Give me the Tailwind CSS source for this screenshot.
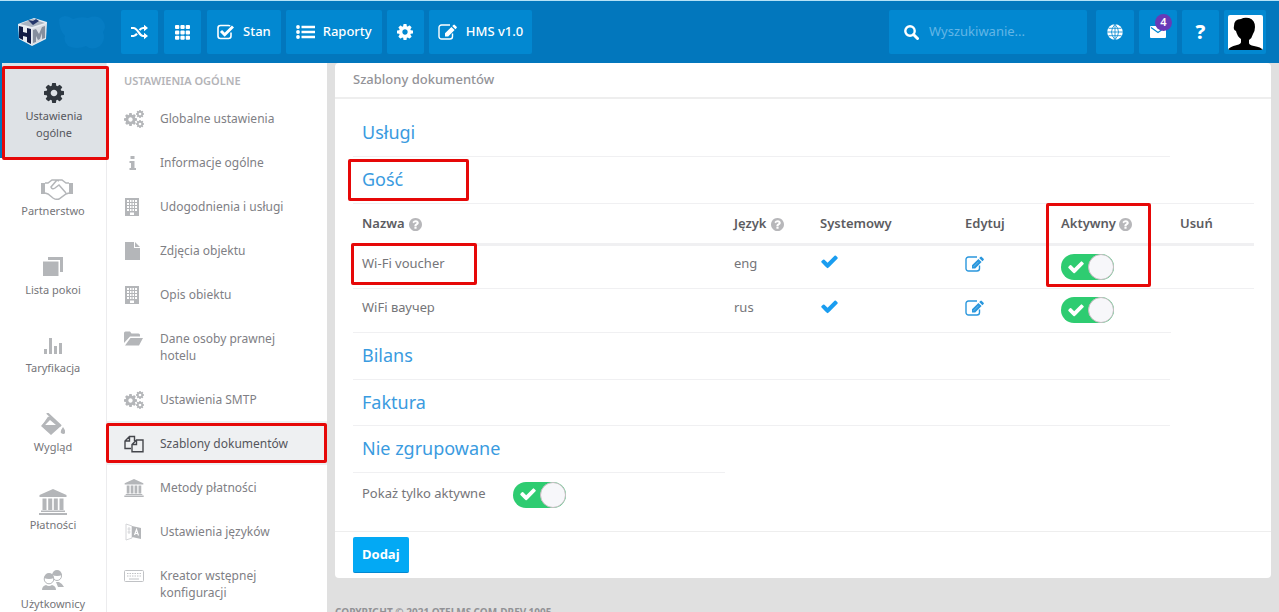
<!DOCTYPE html>
<html lang="pl">
<head>
<meta charset="utf-8">
<meta name="viewport" content="width=device-width, initial-scale=1">
<title>Szablony dokumentów</title>
<script src="https://cdn.jsdelivr.net/npm/@tailwindcss/browser@4"></script>
</head>
<body class="flex h-screen flex-col overflow-hidden bg-[#e0e0e0] font-['Noto_Sans','Open_Sans',sans-serif] text-xs text-[#757579]">

<svg class="hidden" aria-hidden="true">
  <symbol id="check" viewBox="0 0 1792 1792"><path d="M1671 566q0 40-28 68l-724 724-136 136q-28 28-68 28t-68-28l-136-136-362-362q-28-28-28-68t28-68l136-136q28-28 68-28t68 28l294 295 656-657q28-28 68-28t68 28l136 136q28 28 28 68z"/></symbol>
  <symbol id="cog" viewBox="128 128 1536 1536"><path d="M1152 896q0-106-75-181t-181-75-181 75-75 181 75 181 181 75 181-75 75-181zm512-109v222q0 12-8 23t-20 13l-185 28q-19 54-39 91 35 50 107 138 10 12 10 25t-9 23q-27 37-99 108t-94 71q-12 0-26-9l-138-108q-44 23-91 38-16 136-29 186-7 28-36 28h-222q-14 0-24.500-8.500t-11.500-21.500l-28-184q-49-16-90-37l-141 107q-10 9-25 9-14 0-25-11-126-114-165-168-7-10-7-23 0-12 8-23 15-21 51-66.500t54-70.500q-27-50-41-99l-183-27q-13-2-21-12.500t-8-23.500v-222q0-12 8-23t19-13l186-28q14-46 39-92-40-57-107-138-10-12-10-24 0-10 9-23 26-36 98.500-107.500t94.500-71.500q13 0 26 10l138 107q44-23 91-38 16-136 29-186 7-28 36-28h222q14 0 24.500 8.500t11.500 21.500l28 184q49 16 90 37l142-107q9-9 24-9 13 0 25 10 129 119 165 170 7 8 7 22 0 12-8 23-15 21-51 66.500t-54 70.500q26 50 41 98l183 28q13 2 21 12.500t8 23.500z"/></symbol>
  <symbol id="help" viewBox="128 128 1536 1536"><path d="M1024 1376v-192q0-14-9-23t-23-9h-192q-14 0-23 9t-9 23v192q0 14 9 23t23 9h192q14 0 23-9t9-23zm256-672q0-88-55.500-163t-138.500-116-170-41q-243 0-371 213-15 24 8 42l132 100q7 6 19 6 16 0 25-12 53-68 86-92 34-24 86-24 48 0 85.500 26t37.500 59q0 38-20 61t-68 45q-63 28-115.500 86.500t-52.500 125.500v36q0 14 9 23t23 9h192q14 0 23-9t9-23q0-19 21.500-49.500t54.500-49.500q32-18 49-28.500t46-35 44.500-48 28-60.500 12.500-81zm384 192q0 209-103 385.500t-279.500 279.500-385.500 103-385.500-103-279.500-279.500-103-385.500 103-385.500 279.500-279.500 385.500-103 385.500 103 279.500 279.500 103 385.500z"/></symbol>
  <symbol id="edit" viewBox="0 0 20 16"><path d="M14.500 9.500v3a2.500 2.500 0 0 1-2.500 2.500H3.500A2.500 2.500 0 0 1 1 12.500v-9A2.500 2.500 0 0 1 3.500 1H12" fill="none" stroke="currentColor" stroke-width="1.400"/><path d="M7 12.500V9.300l6.400-6.400 3.200 3.200-6.400 6.400zM14.200 2.100l1.200-1.200q.7-.7 1.400 0l1.800 1.800q.7.700 0 1.400l-1.200 1.200z"/><path d="M8.500 10.800l5-5" stroke="#fff" stroke-opacity=".5" stroke-width=".6"/></symbol>
  <symbol id="cogs" viewBox="0 0 20 18"><use href="#cog" x="0" y="3" width="13" height="13"/><use href="#cog" x="12" y="0" width="8" height="8"/><use href="#cog" x="12" y="10" width="8" height="8"/></symbol>
  <symbol id="building" viewBox="0 0 14 18"><path fill-rule="evenodd" d="M0 0h14v18H0zM2 2v2h2V2zm3 0v2h1.500V2zm2.500 0v2H9V2zM10 2v2h2V2zM2 5v2h2V5zm3 0v2h1.500V5zm2.500 0v2H9V5zM10 5v2h2V5zM2 8v2h2V8zm3 0v2h1.500V8zm2.500 0v2H9V8zM10 8v2h2V8zM2 11v2h2v-2zm3 0v2h1.500v-2zm2.500 0v2H9v-2zm2.500 0v2h2v-2zM5 14.500V17h4v-2.500z"/></symbol>
  <symbol id="bank" viewBox="0 0 28 26"><path d="M14 0l13.500 6v2H.5V6zM3.500 9.500h4V21h-4zm5.700 0h4V21h-4zm5.600 0h4V21h-4zm5.700 0h4V21h-4zM2 21.500h24V23H2zM0 24h28v2H0z"/></symbol>
</svg>

<header class="flex h-[63px] shrink-0 items-center justify-between border-t border-[#b5e2f7] bg-[#0277bd] pr-[13px] pl-4 text-white">
  <div class="flex items-center gap-[5px]">
    <a href="#" aria-label="HM" class="mr-[14px] flex w-[86px] items-center gap-[6px]">
      <svg class="h-8 w-9 shrink-0" viewBox="0 0 36 32">
        <path d="M18 2l13 4-1 17-14 7L3 23 2 8z" fill="#e8edf3"/>
        <path d="M17 3l12 4-13 4L4 8z" fill="#aab4c2"/>
        <path d="M12 4l5 1 3-2 3 2-6 4-3-3z" fill="#24366a"/>
        <path d="M3 10l4 1v5l4 1v-5l4 1v15l-4-2v-5l-4-1v4l-4-2z" fill="#111b45"/>
        <path d="M16 13l14-5v14l-14 7z" fill="#d8dce2"/>
        <path d="M17 14l3-1 3 5 3-7 3-1v12l-3 1v-6l-2 6-2 1-2-4v6l-3 1z" fill="#868f9e"/>
      </svg>
      <svg class="h-9 w-[50px] shrink-0" viewBox="0 0 50 36"><path d="M1 5q5-6 14 0 8-3 15-1 10-4 15 3 4 6 0 11 3 8-3 14-8 5-14 0-9 4-18 0-5-5-3-10-6-6-6-17z" fill="#067cc3"/></svg>
    </a>
    <button aria-label="Losowo" class="flex h-11 w-[37px] items-center justify-center rounded-xs bg-[#0288d1]">
      <svg class="h-4 w-[17px]" viewBox="0 0 17 16" fill="none" stroke="currentColor" stroke-width="2.200"><path d="M0 4h2.500C7 4 8 12 12 12h2M0 12h2.500q2 0 3.500-2.300M8.500 6.200Q10 4 12 4h2"/><path d="M13 .8L17 4l-4 3.200zM13 8.800l4 3.200-4 3.200z" fill="currentColor" stroke="none"/></svg>
    </button>
    <button aria-label="Siatka" class="ml-px flex h-11 w-[37px] items-center justify-center rounded-xs bg-[#0288d1]">
      <svg class="size-[15px]" viewBox="0 0 15 15" fill="currentColor"><g id="r"><rect width="4.300" height="4" rx="1"/><rect x="5.400" width="4.300" height="4" rx="1"/><rect x="10.700" width="4.300" height="4" rx="1"/></g><use href="#r" y="5.400"/><use href="#r" y="10.800"/></svg>
    </button>
    <button class="ml-px flex h-11 items-center gap-[9px] rounded-xs bg-[#0288d1] px-[10px] text-[13px] font-medium">
      <svg class="h-4 w-[17px]" viewBox="0 0 17 16"><path d="M14 8.500v3.500q0 2.500-2.500 2.500h-8Q1 14.500 1 12V4q0-2.500 2.500-2.500h8q1 0 1.700.4" fill="none" stroke="currentColor" stroke-width="1.600"/><path d="M4 7l3.700 3.700L16 2.500" fill="none" stroke="currentColor" stroke-width="3"/></svg>
      Stan
    </button>
    <button class="flex h-11 items-center gap-2 rounded-xs bg-[#0288d1] px-[10px] text-[13px] font-medium">
      <svg class="h-4 w-[19px]" viewBox="0 0 19 16" fill="currentColor"><circle cx="2" cy="3" r="1.900"/><circle cx="2" cy="8" r="1.900"/><circle cx="2" cy="13" r="1.900"/><path d="M5.500 1.700H19v2.600H5.500zm0 5H19v2.600H5.500zm0 5H19v2.600H5.500z"/></svg>
      Raporty
    </button>
    <button aria-label="Ustawienia" class="flex h-11 w-[37px] items-center justify-center rounded-xs bg-[#0288d1]">
      <svg class="size-4 fill-current"><use href="#cog"/></svg>
    </button>
    <button class="flex h-11 items-center gap-2 rounded-xs bg-[#0288d1] px-[9px] text-[13px] font-medium">
      <svg class="h-4 w-5 fill-current"><use href="#edit"/></svg>
      HMS v1.0
    </button>
  </div>
  <div class="flex items-center gap-[5px]">
    <label class="mr-1 flex h-11 w-[198px] items-center gap-[10px] rounded-xs bg-[#0288d1] px-[15px]">
      <svg class="size-[15px] shrink-0" viewBox="0 0 15 15" fill="none" stroke="currentColor"><circle cx="6" cy="6" r="4.700" stroke-width="2.400"/><path d="M9.500 9.500l4 4" stroke-width="3" stroke-linecap="round"/></svg>
      <input type="search" aria-label="Wyszukiwanie" placeholder="Wyszukiwanie..." class="w-full min-w-0 bg-transparent text-[13px] outline-none placeholder:text-[#63b6e6]">
    </label>
    <button aria-label="Język" class="flex h-11 w-[38px] items-center justify-center rounded-xs bg-[#0288d1]">
      <svg class="size-4" viewBox="0 0 16 16"><circle cx="8" cy="8" r="7.800" fill="#fff"/><path d="M8 0v16M0 8h16M1.500 4.300h13M1.500 11.700h13M8 .3Q1 8 8 15.700M8 .3Q15 8 8 15.700" fill="none" stroke="#0288d1" stroke-width=".8"/></svg>
    </button>
    <button aria-label="Wiadomości: 4" class="relative flex h-11 w-[38px] items-center justify-center rounded-xs bg-[#0288d1]">
      <svg class="h-3 w-4" viewBox="0 0 16 12"><rect width="16" height="12" rx="1" fill="#fff"/><path d="M1 1.500l7 5 7-5" fill="none" stroke="#0288d1" stroke-width="1.200"/></svg>
      <span class="absolute top-1 left-4 flex size-[17px] items-center justify-center rounded-full bg-[#673ab7] text-[11px] font-semibold">4</span>
    </button>
    <button aria-label="Pomoc" class="flex h-11 w-[37px] items-center justify-center rounded-xs bg-[#0288d1] text-xl font-extrabold">?</button>
    <button aria-label="Profil" class="flex h-11 w-[42px] items-center justify-center rounded-xs bg-[#0288d1]">
      <svg class="size-[35px] rounded-xs bg-white" viewBox="0 0 35 35"><path d="M0 35q1-3 9-5 4-1 4-3v-3q-4-3-5-8-3-1-2-5Q6 4 13 4q3-2 8-1 6 2 6 9 0 4-2 7-1 4-4 6v3q0 2 5 3 7 1 9 4z"/></svg>
    </button>
  </div>
</header>

<div class="flex min-h-0 flex-1">
  <nav aria-label="Główne" class="w-[107px] shrink-0 overflow-hidden border-r border-[#ececee] bg-white text-center text-[11px] leading-4">
    <a href="#" class="flex h-[95px] flex-col items-center border-l-2 border-[#0277bd] bg-[#dee2e6] pt-5 leading-[17px] text-[#55565c]">
      <svg class="mb-1 size-5 fill-[#30363d]"><use href="#cog"/></svg>
      <span>Ustawienia<br>ogólne</span>
    </a>
    <a href="#" class="flex h-[79px] flex-col items-center pt-5">
      <svg class="mb-[3px] ml-2 h-[22px] w-[34px] text-[#b4b6b9]" viewBox="0 0 34 22" fill="none" stroke="currentColor" stroke-width="1.500"><path d="M1 5h4v11H1zM29 5h4v11h-4z" fill="currentColor" stroke="none"/><path d="M5 5h3l4-3h5l2 1M5 15l3 1 5 4q3 2 6 1l7-5 3-1M29 5h-3l-4-3h-5l-6 7q1 3 4 1l4-3 7 8"/></svg>
      Partnerstwo
    </a>
    <a href="#" class="flex h-[79px] flex-col items-center pt-[19px]">
      <svg class="mb-1 h-[22px] w-5 fill-[#b4b6b9]" viewBox="0 0 20 22"><path d="M5 1h15v15h-3V4H5z"/><path d="M0 5.500h15.500V20H0z"/></svg>
      Lista pokoi
    </a>
    <a href="#" class="flex h-[79px] flex-col items-center pt-[18px]">
      <svg class="mb-1 h-[22px] w-[18px] fill-[#b4b6b9]" viewBox="0 0 18 22"><path d="M0 15h3v5H0zm5-11h3v16H5zm5 8h3v8h-3zm5-3h3v11h-3z"/></svg>
      Taryfikacja
    </a>
    <a href="#" class="flex h-[79px] flex-col items-center pt-[18px]">
      <svg class="mb-1 h-[22px] w-6" viewBox="0 0 24 22"><path d="M6 0l14 13M8 4L2 13" fill="none" stroke="#b4b6b9" stroke-width="2.200"/><path fill-rule="evenodd" d="M9 3l11 10-10 9L0 13zm0 4l-5 5h11zM22 14q3 4 2 6t-4 0q-1-2 2-6z" fill="#b4b6b9"/></svg>
      Wygląd
    </a>
    <a href="#" class="flex h-[78px] flex-col items-center pt-[15px]">
      <svg class="mb-[2px] h-[26px] w-7 fill-[#b4b6b9]"><use href="#bank"/></svg>
      Płatności
    </a>
    <a href="#" class="flex h-[79px] flex-col items-center pt-[18px]">
      <svg class="mb-1 h-[22px] w-[22px]" viewBox="0 0 22 22" fill="#b4b6b9"><circle cx="15" cy="6" r="4.500" fill="#fff" stroke="#b4b6b9"/><path d="M10 5q1-5 5-5t5 5q-5 2-10 0zM14 12h3q4 2 5 5h-6z"/><circle cx="7" cy="9" r="4.800" fill="#fff" stroke="#b4b6b9"/><path d="M2 8q1-5 5-5t5 5q-5 2-10 0zM4 15q3 2 6 0 4 1 4 5H0q0-4 4-5z"/></svg>
      Użytkownicy
    </a>
  </nav>

  <nav aria-label="Ustawienia ogólne" class="w-[220px] shrink-0 bg-white leading-[17px]">
    <h2 class="h-[33px] pt-[10px] pl-[17px] text-[11px] leading-4 font-semibold text-[#b4b4b8]">USTAWIENIA OGÓLNE</h2>
    <ul class="text-[#808085] [&_a]:flex [&_a]:gap-4 [&_a]:pt-[14px] [&_a]:pr-8 [&_a]:pb-[13px] [&_a]:pl-[17px] [&_svg]:-mb-px [&_svg]:h-[18px] [&_svg]:w-5 [&_svg]:shrink-0 [&_svg]:fill-[#b4b6b9]">
      <li><a href="#"><svg><use href="#cogs"/></svg>Globalne ustawienia</a></li>
      <li><a href="#"><svg viewBox="0 0 20 18"><path d="M6.500 2h4v3h-4zM5.500 7h5v7H12v2H5.500v-2H7V9H5.500z"/></svg>Informacje ogólne</a></li>
      <li><a href="#"><svg viewBox="0 0 20 18"><use href="#building" x="1" width="14" height="18"/></svg>Udogodnienia i usługi</a></li>
      <li><a href="#"><svg viewBox="0 0 20 18"><path d="M1 0h9v6h6v12H1zM11 0l5 5h-5z"/></svg>Zdjęcia objektu</a></li>
      <li><a href="#"><svg viewBox="0 0 20 18"><use href="#building" x="1" width="14" height="18"/></svg>Opis obiektu</a></li>
      <li><a href="#"><svg viewBox="0 0 20 18"><path d="M0 13V3q0-1.500 1.500-1.500H6L7.500 3.500h7Q16 3.500 16 5v1.500H6zM1 15.500L6.500 8H19l-4 7.500z"/></svg>Dane osoby prawnej hotelu</a></li>
      <li><a href="#"><svg><use href="#cogs"/></svg>Ustawienia SMTP</a></li>
      <li class="relative"><a href="#" aria-current="page" class="bg-[#eef0f2] text-[#55565c]"><svg viewBox="0 0 20 18"><path d="M7 13.500H1V6l4.500-4.500h5V6M5.500 1.500V6H1M8 16.800V9.500L12.500 5H19v11.800zM12.500 5v4.500H8" fill="none" stroke="#44464c" stroke-width="1.400"/></svg>Szablony dokumentów</a>
        <span class="pointer-events-none absolute inset-y-[2px] right-0 -left-px rounded-xs border-3 border-[#e60808]"></span></li>
      <li><a href="#"><svg><use href="#bank"/></svg>Metody płatności</a></li>
      <li><a href="#"><svg viewBox="0 0 20 18"><path d="M2 1l6 2v12l-6 2z" fill="none" stroke="#d4d5d8"/><path d="M3.500 6h3M3.500 9h3M5 4v7" stroke="#d4d5d8"/><path d="M8 3l9 2v11l-9-2z"/><path d="M10.500 12l2-5.500 2 6M11 10.500h3" fill="none" stroke="#fff" stroke-width="1.200"/></svg>Ustawienia języków</a></li>
      <li><a href="#"><svg viewBox="0 0 20 18"><rect x=".5" y="3.500" width="19" height="11" rx="1" fill="none" stroke="#c0c2c5"/><path d="M3 6.500h14M3 9h14" stroke="#c0c2c5" stroke-dasharray="1.500 1"/><path d="M5 12h10" stroke="#c0c2c5"/></svg>Kreator wstępnej konfiguracji</a></li>
    </ul>
  </nav>

  <div class="min-w-0 flex-1 px-2">
    <main class="rounded-sm bg-white text-[13px]">
      <h1 class="h-9 border-b-2 border-[#eeeeee] pt-[6px] pl-[18px] text-[13px] leading-5 font-medium text-[#939398]">Szablony dokumentów</h1>
      <div class="pt-[11px] pr-[17px] pl-[18px]">
        <h2 class="mr-[84px] h-[47px] border-b border-[#f0f0f2] pt-2 pl-[9px] text-lg leading-7 text-[#3a9be0]"><a href="#">Usługi</a></h2>
        <h2 class="relative h-[47px] border-b border-[#f0f0f2] pt-2 pl-[9px] text-lg leading-7 text-[#3a9be0]"><a href="#">Gość</a>
          <span class="pointer-events-none absolute top-[2px] -left-[5px] h-[42px] w-[121px] rounded-xs border-3 border-[#e60808]"></span></h2>
        <table class="w-full table-fixed text-left">
          <colgroup><col><col class="w-[86px]"><col class="w-[145px]"><col class="w-[96px]"><col class="w-[119px]"><col class="w-[83px]"></colgroup>
          <thead>
            <tr class="h-10 text-[#5c5c61] [&>th]:border-b-3 [&>th]:border-[#f0f0f2] [&>th]:pl-[9px] [&>th]:font-semibold">
              <th scope="col">Nazwa <svg class="ml-px inline size-[13px] fill-[#b7b7ba]"><use href="#help"/></svg></th>
              <th scope="col" class="whitespace-nowrap">Język <svg class="ml-px inline size-[13px] fill-[#b7b7ba]"><use href="#help"/></svg></th>
              <th scope="col">Systemowy</th>
              <th scope="col">Edytuj</th>
              <th scope="col" class="relative whitespace-nowrap">Aktywny <svg class="inline size-[13px] fill-[#b7b7ba]"><use href="#help"/></svg>
                <span class="pointer-events-none absolute -top-px -left-[6px] z-10 h-[84px] w-[105px] rounded-xs border-3 border-[#e60808]"></span></th>
              <th scope="col">Usuń</th>
            </tr>
          </thead>
          <tbody class="[&_td]:border-b [&_td]:border-[#f0f0f2] [&_td]:pl-[9px]">
            <tr class="h-11">
              <td class="relative pb-[6px]">Wi-Fi voucher<span class="pointer-events-none absolute -top-[3px] -left-[2px] h-[42px] w-[126px] rounded-xs border-3 border-[#e60808]"></span></td>
              <td class="pb-[6px]">eng</td>
              <td class="pb-[10px]"><svg role="img" aria-label="Tak" class="size-[19px] fill-[#1a9df0]"><use href="#check"/></svg></td>
              <td class="pb-[6px]"><a href="#" aria-label="Edytuj Wi-Fi voucher"><svg class="h-4 w-5 fill-[#2a97dd] text-[#2a97dd]"><use href="#edit"/></svg></a></td>
              <td><label class="relative block h-[26px] w-[53px]"><input type="checkbox" checked aria-label="Aktywny: Wi-Fi voucher" class="block h-[26px] w-[53px] appearance-none rounded-full bg-[#2ecc71]"><svg class="pointer-events-none absolute top-1 left-[6px] size-[18px] fill-white"><use href="#check"/></svg><span class="pointer-events-none absolute top-0 right-0 size-[26px] rounded-full border border-[#c9bcc2] bg-[#f7f7fa]"></span></label></td>
              <td></td>
            </tr>
            <tr class="h-11">
              <td class="pb-1">WiFi ваучер</td>
              <td class="pb-1">rus</td>
              <td class="pb-2"><svg role="img" aria-label="Tak" class="size-[19px] fill-[#1a9df0]"><use href="#check"/></svg></td>
              <td class="pb-1"><a href="#" aria-label="Edytuj WiFi ваучер"><svg class="h-4 w-5 fill-[#2a97dd] text-[#2a97dd]"><use href="#edit"/></svg></a></td>
              <td><label class="relative block h-[26px] w-[53px]"><input type="checkbox" checked aria-label="Aktywny: WiFi ваучер" class="block h-[26px] w-[53px] appearance-none rounded-full bg-[#2ecc71]"><svg class="pointer-events-none absolute top-1 left-[6px] size-[18px] fill-white"><use href="#check"/></svg><span class="pointer-events-none absolute top-0 right-0 size-[26px] rounded-full border border-[#c9bcc2] bg-[#f7f7fa]"></span></label></td>
              <td class="border-transparent!"></td>
            </tr>
          </tbody>
        </table>
        <h2 class="mr-[84px] h-[47px] border-b border-[#f0f0f2] pt-2 pl-[9px] text-lg leading-7 text-[#3a9be0]"><a href="#">Bilans</a></h2>
        <h2 class="mr-[84px] h-[46px] border-b border-[#f0f0f2] pt-2 pl-[9px] text-lg leading-7 text-[#3a9be0]"><a href="#">Faktura</a></h2>
        <h2 class="h-[47px] w-[372px] border-b border-[#f0f0f2] pt-2 pl-[9px] text-lg leading-7 text-[#3a9be0]"><a href="#">Nie zgrupowane</a></h2>
        <div class="flex h-[58px] pt-[9px] pl-[9px]">
          <label for="only-active" class="w-[151px] pt-px leading-5">Pokaż tylko aktywne</label>
          <span class="relative h-[26px] w-[53px]"><input id="only-active" type="checkbox" checked class="block h-[26px] w-[53px] appearance-none rounded-full bg-[#2ecc71]"><svg class="pointer-events-none absolute top-[3px] left-[6px] size-[18px] fill-white"><use href="#check"/></svg><span class="pointer-events-none absolute top-0 right-0 size-[26px] rounded-full border border-[#c9bcc2] bg-[#f7f7fa]"></span></span>
        </div>
      </div>
      <div class="border-t border-[#eeeeee] px-[18px] py-[5px]">
        <button class="h-9 rounded-xs border-b border-[#0288d1] bg-[#03a9f4] px-[9px] pt-px text-[13px] font-bold text-white">Dodaj</button>
      </div>
    </main>
    <footer class="pt-[26px] text-[10px] leading-4 font-bold whitespace-nowrap text-[#929296]">COPYRIGHT © 2021 OTELMS.COM-DREV.1005</footer>
  </div>
</div>

<span class="pointer-events-none absolute top-[66px] left-[2px] h-[94px] w-[107px] rounded-xs border-3 border-[#e60808]"></span>
</body>
</html>
